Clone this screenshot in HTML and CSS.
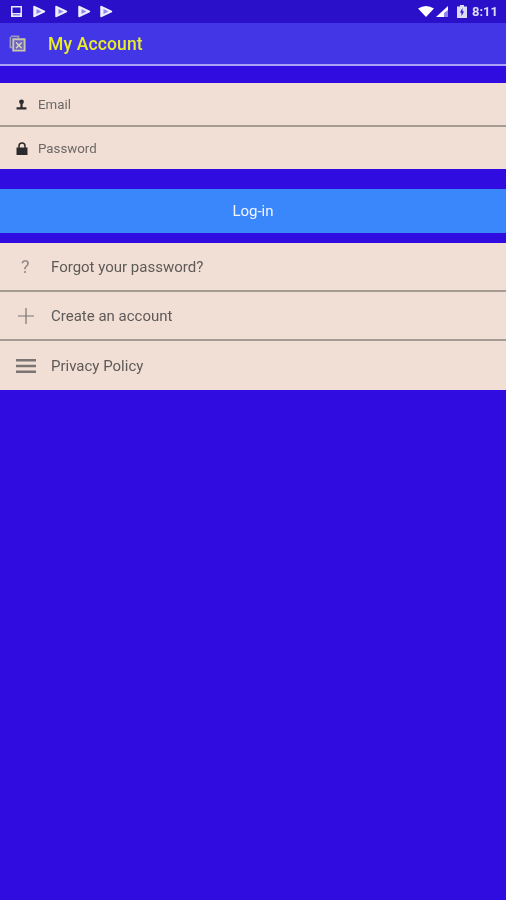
FILE: index.html
```html
<!DOCTYPE html>
<html lang="en">
<head>
<meta charset="utf-8">
<title>My Account</title>
<link rel="stylesheet" href="styles.css">
</head>
<body>
<div class="page">
<div class="statusbar">
  <div class="status-left">
    <svg class="s-pic" viewBox="0 0 13 13"><path fill="#e8e8ff" d="M1 1h11v11H1z"/><path fill="#2a10c8" d="M2.500 2.500h8v5.500h-8z"/><path fill="#8f86ec" d="M3 9h7v1.500H3z"/></svg>
    <svg class="s-play" viewBox="0 0 13 13"><path fill="#eeeeff" stroke="#eeeeff" stroke-width="1.500" stroke-linejoin="round" d="M1 1.500l10.500 5-10.500 5z"/><path fill="#8f86ec" d="M3.500 4l5 2.500-5 2.500z"/></svg>
    <svg class="s-play" viewBox="0 0 13 13"><path fill="#eeeeff" stroke="#eeeeff" stroke-width="1.500" stroke-linejoin="round" d="M1 1.500l10.500 5-10.500 5z"/><path fill="#8f86ec" d="M3.500 4l5 2.500-5 2.500z"/></svg>
    <svg class="s-play" viewBox="0 0 13 13"><path fill="#eeeeff" stroke="#eeeeff" stroke-width="1.500" stroke-linejoin="round" d="M1 1.500l10.500 5-10.500 5z"/><path fill="#8f86ec" d="M3.500 4l5 2.500-5 2.500z"/></svg>
    <svg class="s-play" viewBox="0 0 13 13"><path fill="#eeeeff" stroke="#eeeeff" stroke-width="1.500" stroke-linejoin="round" d="M1 1.500l10.500 5-10.500 5z"/><path fill="#8f86ec" d="M3.500 4l5 2.500-5 2.500z"/></svg>
  </div>
  <div class="status-right">
    <svg class="s-wifi" viewBox="0 0 16 11"><path fill="#fff" d="M0 2.500Q8-2.500 16 2.500L8 11z"/></svg>
    <svg class="s-signal" viewBox="0 0 12 11"><path fill="#fff" d="M12 0v11H0z"/><path fill="#8f86ec" d="M12 4v7H8V7z"/></svg>
    <svg class="s-batt" viewBox="0 0 10 13"><path fill="#dcdcf8" d="M3 0h4v1.500h3V13H0V1.500h3z"/><path fill="#2a10c8" d="M5.500 3L3 7.500h1.500V11L7 6.500H5.500z"/></svg>
    <span class="clock">8:11</span>
  </div>
</div>
<header class="toolbar">
  <svg class="app-icon" viewBox="0 0 18 18"><path fill="none" stroke="#9c9ab8" stroke-width="1.800" d="M2 1.500h8v2M1.500 2v11h2"/><path fill="#6a62c4" stroke="#c9c7a8" stroke-width="2" d="M4.500 4.500h12v12h-12z"/><path stroke="#d5d3b0" stroke-width="1.700" d="M7.500 8l6 6M13.500 8l-6 6"/></svg>
  <h1 class="title">My Account</h1>
</header>

<section class="card fields">
  <div class="field">
    <span class="field-icon"><svg class="i-user" viewBox="0 0 10 10"><circle cx="5" cy="2.600" r="2.200" fill="#2c2a2c"/><path fill="#2c2a2c" d="M4 4h2v3.500h3.500V9.500H.5V7.500H4z"/></svg></span>
    <span class="field-label">Email</span>
  </div>
  <div class="field">
    <span class="field-icon"><svg class="i-lock" viewBox="0 0 12 13"><path fill="none" stroke="#2c2a2c" stroke-width="1.500" d="M3 6V4a3 3 0 0 1 6 0v2"/><path fill="#2c2a2c" d="M.5 5.500h11V13H.5z"/></svg></span>
    <span class="field-label">Password</span>
  </div>
</section>

<button class="login" type="button">Log-in</button>

<nav class="card links">
  <a class="link">
    <span class="link-icon q">?</span>
    <span>Forgot your password?</span>
  </a>
  <a class="link">
    <span class="link-icon"><svg class="i-plus" viewBox="0 0 16 16"><path stroke="#7a7472" stroke-width="1.200" d="M8 0v16M0 8h16"/></svg></span>
    <span>Create an account</span>
  </a>
  <a class="link">
    <span class="link-icon"><svg class="i-menu" viewBox="0 0 20 14"><path stroke="#7a7472" stroke-width="2.400" d="M0 1.200h20M0 7h20M0 12.800h20"/></svg></span>
    <span>Privacy Policy</span>
  </a>
</nav>
</div>
</body>
</html>
```

FILE: styles.css
```css
* { box-sizing: border-box; }
html, body { margin: 0; height: 100%; }
body {
  background: #310ce0;
  font-family: Roboto, "Liberation Sans", sans-serif;
  overflow: hidden;
}
.page { filter: blur(0.45px); }
svg { display: block; }

.statusbar {
  height: 23px;
  background: #2a10c8;
  display: flex;
  justify-content: space-between;
  align-items: center;
  padding: 0 8px 0 10px;
}
.status-left { display: flex; align-items: center; gap: 9.500px; }
.s-pic { width: 13px; height: 13px; }
.s-play { width: 13px; height: 13px; }
.status-right { display: flex; align-items: center; }
.s-wifi { width: 16px; height: 11px; margin-right: 2px; }
.s-signal { width: 12px; height: 11px; margin-right: 9px; }
.s-batt { width: 10px; height: 13px; margin-right: 5px; }
.clock { color: #dcdcf8; font-size: 13px; font-weight: 700; }

.toolbar {
  height: 43px;
  background: #4336e6;
  border-bottom: 2px solid #a9a2f5;
  display: flex;
  align-items: center;
  padding: 0 0 0 9px;
}
.app-icon { width: 17px; height: 17px; margin-right: 22px; }
.title {
  margin: 0;
  font-size: 17.500px;
  font-weight: 500;
  letter-spacing: 0.150px;
  color: #e8ee2a;
}

.card { background: #f1dfd5; }
.fields { margin-top: 17px; }
.field {
  height: 44px;
  display: flex;
  align-items: center;
  border-bottom: 2px solid #a59b93;
}
.field:last-child { border-bottom: 0; height: 42px; }
.field-icon { width: 38px; display: flex; flex: none; padding-left: 16px; }
.i-user { width: 11px; height: 11px; }
.i-lock { width: 12px; height: 13px; }
.field-label { font-size: 13.300px; color: #6e6866; }

.login {
  display: block;
  width: 100%;
  height: 44px;
  margin: 20px 0 10px;
  border: 0;
  background: #3a86fb;
  color: #f2f6ff;
  font: 400 15px Roboto, "Liberation Sans", sans-serif;
}

.link {
  height: 49px;
  display: flex;
  align-items: center;
  border-bottom: 2px solid #a59b93;
  font-size: 15px;
  color: #5e5a58;
}
.link:last-child { border-bottom: 0; height: 49px; }
.link-icon {
  width: 51px;
  flex: none;
  display: flex;
  padding-left: 16px;
}
.q { font-size: 18px; color: #8d8885; padding-left: 21px; }
.i-plus { width: 16px; height: 16px; margin-left: 2px; }
.i-menu { width: 20px; height: 14px; }
```
